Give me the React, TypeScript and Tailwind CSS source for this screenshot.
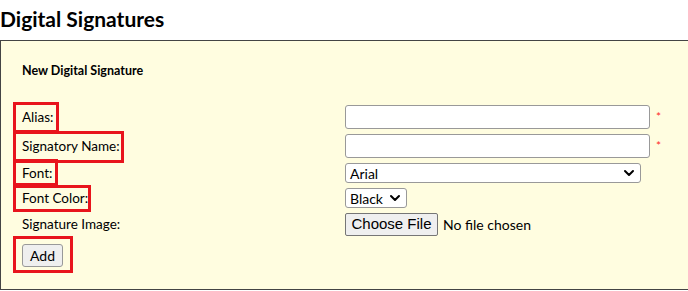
import { ChevronDown } from "lucide-react";

function Marked({ children, box }: { children: React.ReactNode; box: string }) {
  return (
    <span className="relative inline-block">
      {children}
      <span className={`absolute border-[3px] border-[#e8141c] ${box}`} />
    </span>
  );
}

function Row({ label, children, h }: { label: React.ReactNode; children: React.ReactNode; h: string }) {
  return (
    <div className={`flex items-center ${h}`}>
      <div className="w-[323px] shrink-0">{label}</div>
      <div className="flex items-center">{children}</div>
    </div>
  );
}

function Star() {
  return <span className="ml-[6px] text-[12px] text-[#ff2a2a] leading-none">*</span>;
}

export default function App() {
  return (
    <div className="w-[688px] h-[291px] overflow-hidden bg-white font-['Lato','Noto_Sans',sans-serif] text-[13.5px] text-black">
      <h1 className="h-[40px] pt-[5px] text-[21px] font-bold leading-[28px]">Digital Signatures</h1>
      <div className="h-[250px] w-[700px] border border-[#444] bg-[#fffde0] pl-[21px]">
        <div className="pt-[21px] text-[12.5px] font-bold leading-[18px]">New Digital Signature</div>
        <div className="mt-[25px] flex flex-col gap-[5px]">
          <Row
            h="h-[24px]"
            label={
              <Marked box="-left-[9px] -right-[6px] -top-[5px] -bottom-[6px]">
                <span className="leading-[18px]">Alias:</span>
              </Marked>
            }
          >
            <input className="h-[24px] w-[305px] rounded-[3px] border border-[#999] bg-white" />
            <Star />
          </Row>
          <Row
            h="h-[24px]"
            label={
              <Marked box="-left-[9px] -right-[4px] -top-[5px] -bottom-[7px]">
                <span className="leading-[18px]">Signatory Name:</span>
              </Marked>
            }
          >
            <input className="h-[24px] w-[305px] rounded-[3px] border border-[#999] bg-white" />
            <Star />
          </Row>
          <Row
            h="h-[20px]"
            label={
              <Marked box="-left-[9px] -right-[6px] -top-[4px] -bottom-[3px]">
                <span className="leading-[18px]">Font:</span>
              </Marked>
            }
          >
            <div className="flex h-[20px] w-[296px] items-center justify-between rounded-[3px] border border-[#999] bg-white pl-[4px] pr-[3px] text-[14px]">
              <span>Arial</span>
              <ChevronDown size={16} strokeWidth={3} />
            </div>
          </Row>
          <Row
            h="h-[20px]"
            label={
              <Marked box="-left-[9px] -right-[3px] -top-[3px] -bottom-[4px]">
                <span className="leading-[18px]">Font Color:</span>
              </Marked>
            }
          >
            <div className="flex h-[20px] w-[62px] items-center justify-between rounded-[3px] border border-[#999] bg-white pl-[4px] pr-[3px] text-[14px]">
              <span>Black</span>
              <ChevronDown size={16} strokeWidth={3} />
            </div>
          </Row>
          <Row h="h-[23px]" label={<span>Signature Image:</span>}>
            <div className="flex h-[23px] w-[93px] items-center justify-center rounded-[2px] border border-[#767676] bg-[#efefef] font-['Liberation_Sans',sans-serif] text-[15px]">
              Choose File
            </div>
            <span className="ml-[5px] text-[14px]">No file chosen</span>
          </Row>
          <div className="pt-[3px]">
            <Marked box="-left-[9px] -right-[10px] -top-[8px] -bottom-[6px]">
              <button className="h-[23px] w-[41px] rounded-[3px] border border-[#999] bg-[#efefef] text-[14px] leading-none">
                Add
              </button>
            </Marked>
          </div>
        </div>
      </div>
    </div>
  );
}
